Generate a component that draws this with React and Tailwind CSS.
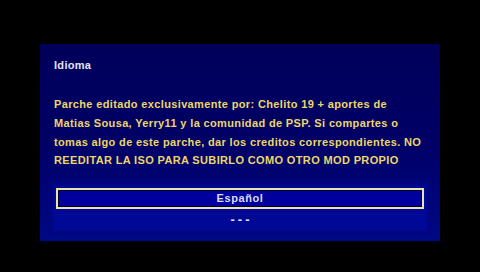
import React from 'react';

const lines = [
  'Parche editado exclusivamente por: Chelito 19 + aportes de',
  'Matias Sousa, Yerry11 y la comunidad de PSP. Si compartes o',
  'tomas algo de este parche, dar los creditos correspondientes. NO',
  'REEDITAR LA ISO PARA SUBIRLO COMO OTRO MOD PROPIO',
];

export default function App() {
  return (
    <div className="w-[480px] h-[272px] bg-black pt-[44px] pl-[40px] font-['Liberation_Sans',Arial,sans-serif] font-bold overflow-hidden">
      <div className="w-[400px] h-[197px] bg-gradient-to-b from-[#00005a] via-[#000066] to-[#000a86] flex flex-col pt-[12px] px-[14px]">
        {/* título */}
        <div className="text-[11px] leading-[18px] text-[#e4e4f4] tracking-[0.3px]">Idioma</div>

        {/* texto de créditos */}
        <div className="mt-[21px] text-[11px] leading-[18.8px] text-[#ecd66a] tracking-[0.36px] whitespace-nowrap">
          {lines.map((l) => (
            <div key={l}>{l}</div>
          ))}
        </div>

        {/* lista de idiomas */}
        <div className="mt-[15px] -mx-[1px] h-[46px] bg-[#000896] shadow-[0_0_6px_4px_#000680] flex flex-col pt-[3px] px-[3px]">
          <div className="h-[21px] shrink-0 border-2 border-[#ece4a6] bg-[#00009e] shadow-[inset_0_0_0_1px_#000030] flex items-center justify-center text-[11px] text-[#dcdcf4] tracking-[0.6px]">
            Español
          </div>
          <div className="mt-[2px] pl-[3px] text-center text-[13px] leading-[18px] text-[#e4e4f4] tracking-[3px]">---</div>
        </div>
      </div>
    </div>
  );
}
